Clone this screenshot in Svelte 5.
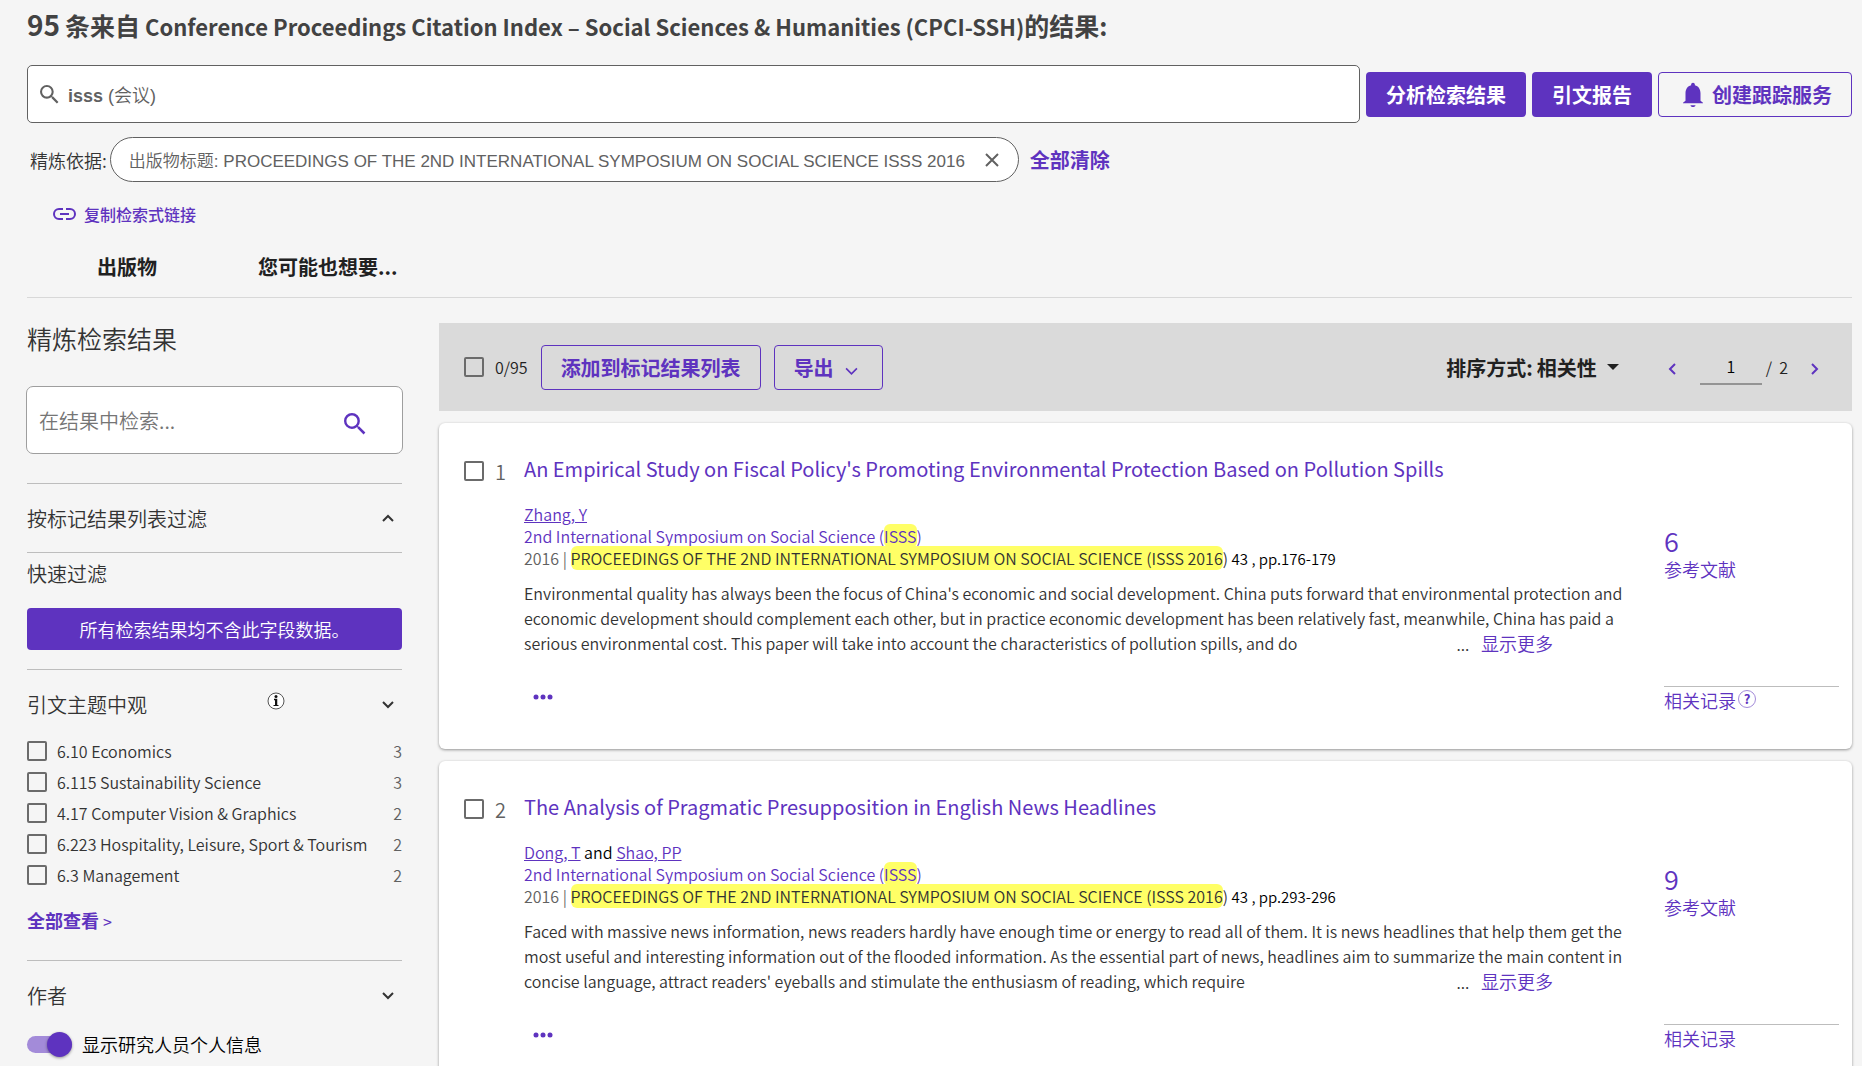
<script lang="ts">
	let refineQuery = $state('');
	let page = $state('1');
	let showProfiles = $state(true);

	const topics = [
		{ name: '6.10 Economics', count: 3 },
		{ name: '6.115 Sustainability Science', count: 3 },
		{ name: '4.17 Computer Vision & Graphics', count: 2 },
		{ name: '6.223 Hospitality, Leisure, Sport & Tourism', count: 2 },
		{ name: '6.3 Management', count: 2 }
	];

	const records = [
		{
			id: 1,
			title: "An Empirical Study on Fiscal Policy's Promoting Environmental Protection Based on Pollution Spills",
			authors: ['Zhang, Y'],
			pages: '43 , pp.176-179',
			abstract:
				"Environmental quality has always been the focus of China's economic and social development. China puts forward that environmental protection and economic development should complement each other, but in practice economic development has been relatively fast, meanwhile, China has paid a serious environmental cost. This paper will take into account the characteristics of pollution spills, and do",
			refs: 6,
			help: true
		},
		{
			id: 2,
			title: 'The Analysis of Pragmatic Presupposition in English News Headlines',
			authors: ['Dong, T', 'Shao, PP'],
			pages: '43 , pp.293-296',
			abstract:
				"Faced with massive news information, news readers hardly have enough time or energy to read all of them. It is news headlines that help them get the most useful and interesting information out of the flooded information. As the essential part of news, headlines aim to summarize the main content in concise language, attract readers' eyeballs and stimulate the enthusiasm of reading, which require",
			refs: 9,
			help: false
		}
	];
</script>

{#snippet chevron(d: string, size: number, weight: number = 2)}
	<svg class="chevron" width={size} height={size} viewBox="0 0 12 12" aria-hidden="true">
		<path {d} fill="none" stroke="currentColor" stroke-width={weight} />
	</svg>
{/snippet}

{#snippet magnifier(size: number)}
	<svg width={size} height={size} viewBox="3 3 18 18" aria-hidden="true">
		<path
			fill="currentColor"
			d="M15.5 14h-.79l-.28-.27A6.47 6.47 0 0 0 16 9.5 6.5 6.5 0 1 0 9.5 16c1.61 0 3.09-.59 4.23-1.57l.27.28v.79l5 4.99L20.49 19l-4.99-5zm-6 0C7.01 14 5 11.99 5 9.5S7.01 5 9.5 5 14 7.01 14 9.5 11.99 14 9.5 14z"
		/>
	</svg>
{/snippet}

<div class="page">
	<header>
		<h1>
			<span class="total">95</span> <span class="large">条来自</span> Conference Proceedings Citation Index – Social
			Sciences &amp; Humanities (CPCI-SSH)<span class="large">的结果:</span>
		</h1>

		<div class="query-row">
			<div class="query-box">
				{@render magnifier(19)}
				<span><b>isss</b> (会议)</span>
			</div>
			<button class="btn solid">分析检索结果</button>
			<button class="btn solid">引文报告</button>
			<button class="btn outline alert">
				<svg width="20" height="25" viewBox="4 2 16 20" preserveAspectRatio="none" aria-hidden="true">
					<path
						fill="currentColor"
						d="M12 22c1.1 0 2-.6 2-1.500h-4c0 .9.9 1.500 2 1.500zm6-5v-6c0-3.070-1.640-5.640-4.500-6.320V4c0-.83-.67-1.500-1.500-1.500s-1.500.67-1.500 1.500v.68C7.630 5.360 6 7.920 6 11v6l-2 1.500v.5h16v-.5l-2-1.500z"
					/>
				</svg>
				创建跟踪服务
			</button>
		</div>

		<div class="refine-row">
			<span class="refine-label">精炼依据:</span>
			<button class="chip">
				<span>出版物标题: PROCEEDINGS OF THE 2ND INTERNATIONAL SYMPOSIUM ON SOCIAL SCIENCE ISSS 2016</span>
				<svg width="14" height="14" viewBox="0 0 14 14" aria-hidden="true">
					<path d="M1 1l12 12M13 1L1 13" stroke="currentColor" stroke-width="2" />
				</svg>
			</button>
			<a class="clear" href="#clear">全部清除</a>
		</div>

		<a class="copy-link" href="#copy">
			<svg width="23" height="12" viewBox="0 0 23 12" fill="none" stroke="currentColor" stroke-width="2" aria-hidden="true">
				<path d="M10 1H6a5 5 0 0 0 0 10h4M13 1h4a5 5 0 0 1 0 10h-4M7 6h9" />
			</svg>
			复制检索式链接
		</a>

		<nav>
			<a href="#publications">出版物</a>
			<a href="#suggestions">您可能也想要...</a>
		</nav>
	</header>

	<div class="content">
		<aside>
			<h2>精炼检索结果</h2>
			<form class="refine-search">
				<input type="text" placeholder="在结果中检索..." aria-label="在结果中检索" bind:value={refineQuery} />
				<button type="button" aria-label="检索">{@render magnifier(22)}</button>
			</form>

			<section class="marked">
				<button class="section-head">
					<span>按标记结果列表过滤</span>
					{@render chevron('M1 9l5-5 5 5', 12)}
				</button>
			</section>

			<section class="quick">
				<h3>快速过滤</h3>
				<button class="no-data">所有检索结果均不含此字段数据。</button>
			</section>

			<section class="topics">
				<button class="section-head">
					<span>引文主题中观</span>
					<svg class="info" width="18" height="18" viewBox="0 0 18 18" aria-hidden="true">
						<circle cx="9" cy="9" r="8" fill="#fff" stroke="#555" />
						<path d="M7 7.500h2.500v6" fill="none" stroke="#111" stroke-width="1.500" />
						<path d="M9 7v6" stroke="#111" stroke-width="2" />
						<path d="M6.500 13.500h5" stroke="#111" />
						<circle cx="9" cy="4.500" r="1.500" fill="#111" />
					</svg>
					{@render chevron('M1 4l5 5 5-5', 12)}
				</button>
				<ul>
					{#each topics as topic}
						<li>
							<label><input type="checkbox" class="check" /> {topic.name}</label>
							<span class="count">{topic.count}</span>
						</li>
					{/each}
				</ul>
				<a class="see-all" href="#topics">全部查看 <span>&gt;</span></a>
			</section>

			<section class="authors-filter">
				<button class="section-head">
					<span>作者</span>
					{@render chevron('M1 4l5 5 5-5', 12)}
				</button>
				<label class="switch">
					<input type="checkbox" bind:checked={showProfiles} />
					显示研究人员个人信息
				</label>
			</section>
		</aside>

		<main>
			<div class="toolbar">
				<label class="select-all"><input type="checkbox" class="check" /> 0/95</label>
				<button class="btn outline">添加到标记结果列表</button>
				<button class="btn outline export">
					导出
					{@render chevron('M1 4l5 5 5-5', 13, 1.5)}
				</button>

				<div class="sort">
					<label for="sort">排序方式:</label>
					<select id="sort">
						<option>相关性</option>
					</select>
					<svg width="12" height="6" viewBox="0 0 12 6" aria-hidden="true">
						<path d="M0 0h12L6 6z" fill="currentColor" />
					</svg>
				</div>

				<div class="pager">
					<button aria-label="上一页">{@render chevron('M9 1L4 6l5 5', 12)}</button>
					<input type="text" aria-label="页码" bind:value={page} />
					<span class="pages">/&nbsp; 2</span>
					<button aria-label="下一页">{@render chevron('M4 1l5 5-5 5', 12)}</button>
				</div>
			</div>

			{#each records as record (record.id)}
				<article>
					<label class="pick"><input type="checkbox" class="check" /> {record.id}</label>
					<div class="record">
						<h3><a href="#record">{record.title}</a></h3>
						<div class="meta">
							<div>
								{#each record.authors as author, i}
									{#if i > 0}{' and '}{/if}<a class="author" href="#author">{author}</a>
								{/each}
							</div>
							<div><a href="#conference">2nd International Symposium on Social Science (<mark>ISSS</mark>)</a></div>
							<div>
								<span class="year">2016 |</span>
								<span class="source"
									><mark>PROCEEDINGS OF THE 2ND INTERNATIONAL SYMPOSIUM ON SOCIAL SCIENCE (ISSS 2016</mark>)</span
								>
								<span class="issue">{record.pages}</span>
							</div>
						</div>
						<p class="abstract">
							{record.abstract}
							<span class="more">... <a href="#more">显示更多</a></span>
						</p>
						<button class="dots" aria-label="更多操作">
							<svg width="20" height="6" viewBox="0 0 20 6" fill="currentColor" aria-hidden="true">
								<circle cx="3" cy="3" r="2.500" />
								<circle cx="10" cy="3" r="2.500" />
								<circle cx="17" cy="3" r="2.500" />
							</svg>
						</button>
					</div>
					<div class="stats">
						<a class="refs" href="#refs"><span class="number">{record.refs}</span>参考文献</a>
						<div class="related">
							<a href="#related">相关记录</a>
							{#if record.help}
								<button class="help" aria-label="帮助">?</button>
							{/if}
						</div>
					</div>
				</article>
			{/each}
		</main>
	</div>
</div>

<style>
	:global(body) {
		margin: 0;
		background: #f5f5f5;
	}

	.page {
		height: 100vh;
		overflow: hidden;
		padding: 0 10px 0 27px;
		box-sizing: border-box;
		font-family: 'Noto Sans CJK SC', sans-serif;
		font-size: 16px;
		font-weight: 350;
		color: #333;
	}

	h1,
	h2,
	h3,
	p,
	ul {
		margin: 0;
		padding: 0;
		font-weight: inherit;
	}

	a {
		color: #5e33bf;
		text-decoration: none;
	}

	b {
		font-weight: 700;
	}

	button,
	input,
	select {
		font: inherit;
		color: inherit;
		margin: 0;
		padding: 0;
		border: none;
		background: none;
	}

	button,
	select {
		cursor: pointer;
	}

	svg {
		flex: none;
	}

	.check {
		appearance: none;
		flex: none;
		width: 20px;
		height: 20px;
		box-sizing: border-box;
		border: 2px solid #6b6b6b;
		border-radius: 2px;
	}

	.btn {
		height: 45px;
		flex: none;
		border-radius: 4px;
		padding: 0 20px;
		box-sizing: border-box;
		font-size: 20px;
		font-weight: 700;
		white-space: nowrap;
	}

	.solid {
		background: #5e33bf;
		color: #fff;
	}

	.outline {
		border: 1px solid #5e33bf;
		color: #5e33bf;
	}

	/* Header */
	h1 {
		height: 65px;
		line-height: 48px;
		font-size: 22px;
		font-weight: 700;
		color: #424242;
		white-space: nowrap;
	}

	.total {
		font-size: 28px;
	}

	.large {
		font-size: 25px;
	}

	.query-row {
		display: flex;
		align-items: center;
		gap: 6px;
	}

	.query-box {
		flex: 1;
		display: flex;
		align-items: center;
		gap: 9px;
		height: 58px;
		padding: 0 12px;
		box-sizing: border-box;
		background: #fff;
		border: 1px solid #616161;
		border-radius: 5px;
		color: #616161;
		font-family: 'Liberation Sans', 'Noto Sans CJK SC', sans-serif;
		font-size: 18px;
	}

	.alert {
		display: flex;
		align-items: center;
		gap: 9px;
		padding: 0 19px 0 24px;
	}

	.refine-row {
		display: flex;
		align-items: center;
		gap: 3px;
		margin-top: 14px;
		padding-left: 3px;
	}

	.refine-label {
		font-size: 18px;
	}

	.chip {
		display: flex;
		align-items: center;
		gap: 20px;
		height: 45px;
		padding: 0 19px 0 18px;
		box-sizing: border-box;
		border: 1px solid #616161;
		border-radius: 23px;
		background: #fff;
		color: #616161;
		font-family: 'Liberation Sans', 'Noto Sans CJK SC', sans-serif;
		font-size: 17px;
	}

	.clear {
		margin-left: 8px;
		font-size: 20px;
		font-weight: 700;
	}

	.copy-link {
		display: flex;
		align-items: center;
		width: max-content;
		gap: 8px;
		margin-top: 20px;
		padding-left: 26px;
		line-height: 24px;
		font-weight: 500;
	}

	nav {
		display: flex;
		gap: 101px;
		height: 71px;
		padding-left: 70px;
		border-bottom: 1px solid #d8d8d8;
		line-height: 82px;
	}

	nav a {
		font-size: 20px;
		font-weight: 700;
		color: #212121;
	}

	/* Sidebar */
	.content {
		display: flex;
		align-items: flex-start;
		gap: 37px;
		margin-top: 25px;
	}

	aside {
		flex: none;
		width: 375px;
	}

	h2 {
		font-size: 25px;
		line-height: 30px;
	}

	.refine-search {
		display: flex;
		align-items: center;
		height: 68px;
		margin: 33px -1px 29px;
		box-sizing: border-box;
		background: #fff;
		border: 1px solid #9e9e9e;
		border-radius: 7px;
		padding: 0 36px 0 12px;
	}

	.refine-search input {
		flex: 1;
		min-width: 0;
		font-size: 20px;
		outline: none;
	}

	.refine-search input::placeholder {
		color: #757575;
	}

	.refine-search button {
		display: flex;
		padding-top: 8px;
		color: #5e33bf;
	}

	section {
		border-top: 1px solid #bdbdbd;
	}

	.section-head {
		display: flex;
		align-items: center;
		width: 100%;
		height: 68px;
		padding-right: 8px;
		font-size: 20px;
		text-align: left;
	}

	.section-head span {
		flex: 1;
	}

	.quick {
		height: 117px;
		box-sizing: border-box;
	}

	.quick h3 {
		font-size: 20px;
		line-height: 42px;
	}

	.no-data {
		width: 100%;
		height: 42px;
		margin-top: 13px;
		border-radius: 4px;
		background: #5e33bf;
		color: #fff;
		font-size: 18px;
	}

	.info {
		margin: 0 97px 6px 0;
	}

	ul {
		margin-top: -3px;
		list-style: none;
	}

	li {
		display: flex;
		justify-content: space-between;
		align-items: center;
		height: 31px;
	}

	li label {
		display: flex;
		align-items: center;
		gap: 10px;
	}

	.count {
		color: #616161;
	}

	.see-all {
		display: block;
		margin: 17px 0 26px;
		font-size: 18px;
		font-weight: 700;
		line-height: 26px;
	}

	.see-all span {
		font-size: 16px;
		font-weight: 400;
	}

	.switch {
		display: flex;
		align-items: center;
		gap: 10px;
		height: 30px;
		font-size: 18px;
		color: #000;
	}

	.switch input {
		appearance: none;
		display: flex;
		align-items: center;
		width: 45px;
		height: 17px;
		border-radius: 9px;
		background: #bdbdbd;
	}

	.switch input::before {
		content: '';
		width: 25px;
		height: 25px;
		border-radius: 50%;
		background: #fff;
		box-shadow: 0 1px 3px rgba(0, 0, 0, 0.4);
	}

	.switch input:checked {
		justify-content: flex-end;
		background: #a38bd9;
	}

	.switch input:checked::before {
		background: #5e33bf;
	}

	/* Results */
	main {
		flex: 1;
		min-width: 0;
	}

	.toolbar {
		display: flex;
		align-items: center;
		height: 88px;
		padding: 0 28px 0 25px;
		background: #dadada;
		color: #212121;
	}

	.toolbar .btn {
		padding: 0 19px;
	}

	.select-all {
		display: flex;
		align-items: center;
		gap: 11px;
		margin-right: 13px;
	}

	.export {
		display: flex;
		align-items: center;
		gap: 11px;
		margin-left: 13px;
	}

	.toolbar .export {
		padding-right: 24px;
	}

	.export :global(.chevron) {
		margin-top: 6px;
	}

	.sort {
		display: flex;
		align-items: center;
		gap: 4px;
		margin-left: auto;
		font-size: 20px;
		font-weight: 700;
	}

	.sort select {
		appearance: none;
	}

	.sort svg {
		margin-left: 6px;
	}

	.pager {
		display: flex;
		align-items: center;
		margin-left: 43px;
	}

	.pager button {
		display: flex;
		padding: 8px 4px 4px;
		color: #5e33bf;
	}

	.pager input {
		width: 62px;
		height: 34px;
		margin-left: 18px;
		border-bottom: 2px solid #949494;
		text-align: center;
		color: #000;
	}

	.pages {
		margin: 0 16px 0 4px;
	}

	article {
		display: flex;
		height: 326px;
		margin-top: 12px;
		box-sizing: border-box;
		padding: 32px 13px 0 25px;
		border-radius: 6px;
		background: #fff;
		box-shadow: 0 1px 3px rgba(0, 0, 0, 0.4);
	}

	.pick {
		display: flex;
		align-items: center;
		gap: 11px;
		width: 60px;
		height: 32px;
		font-size: 20px;
		color: #616161;
	}

	.record {
		flex: 1;
		min-width: 0;
	}

	.record h3 {
		font-size: 20px;
		font-weight: 400;
		line-height: 28px;
	}

	.meta {
		margin-top: 20px;
		line-height: 22px;
		color: #000;
	}

	.author {
		text-decoration: underline;
	}

	mark {
		background: #ffff66;
		border-radius: 6px;
		color: inherit;
	}

	.year {
		color: #616161;
	}

	.source {
		color: #333;
	}

	.issue {
		font-size: 15px;
	}

	.abstract {
		margin: 11px 41px 0 0;
		line-height: 25px;
	}

	.more {
		float: right;
		margin-right: 70px;
	}

	.more a {
		margin-left: 8px;
		font-size: 18px;
	}

	.dots {
		display: flex;
		margin-top: 30px;
		padding: 8px 9px;
		color: #5e33bf;
	}

	.stats {
		flex: none;
		width: 175px;
		padding-top: 70px;
		font-size: 18px;
	}

	.refs {
		display: block;
		height: 161px;
		line-height: 24px;
	}

	.number {
		display: block;
		font-size: 27px;
		line-height: 32px;
	}

	.related {
		display: flex;
		align-items: center;
		gap: 2px;
		border-top: 1px solid #bdbdbd;
		line-height: 26px;
	}

	.help {
		width: 18px;
		height: 18px;
		margin-bottom: 2px;
		border: 1px solid #a38bd9;
		border-radius: 50%;
		color: #5e33bf;
		font-size: 13px;
		font-weight: 700;
		line-height: 16px;
	}
</style>
